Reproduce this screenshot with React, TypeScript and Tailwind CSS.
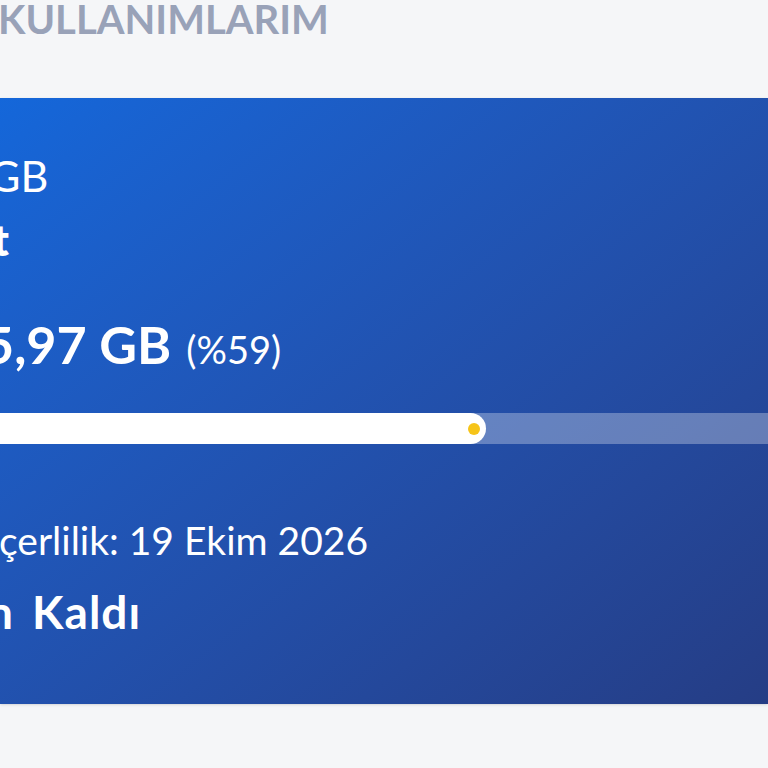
export default function App() {
  const usedPercent = 59;
  return (
    <div className="min-h-screen overflow-hidden bg-[#f5f6f8] font-['Lato',sans-serif]">
      <h1 className="-mt-[1px] -ml-[2px] text-[40px] font-bold leading-none text-[#99a2b8]">KULLANIMLARIM</h1>

      <section className="mt-[59px] h-[606px] bg-linear-to-br from-[#1467da] to-[#253d85] pt-[56px] text-white shadow-sm">
        <p className="-ml-[11px] text-[43px] leading-none">GB</p>
        <p className="mt-[20px] -ml-[8px] text-[44px] font-extrabold leading-none">t</p>

        <div className="mt-[57px] flex items-baseline gap-[15px] leading-none">
          <span className="-ml-[16px] text-[52px] font-bold">5,97 GB</span>
          <span className="text-[38px]">(%{usedPercent})</span>
        </div>

        <div className="mt-[43px] flex h-[31px] w-full bg-white/30">
          <div className="flex h-full w-[486px] items-center justify-end rounded-r-full bg-white pr-[6px]">
            <span className="h-3 w-3 rounded-full bg-[#f6c419]" />
          </div>
        </div>

        <p className="mt-[77px] -ml-[1px] text-[39px] leading-none">çerlilik: 19 Ekim 2026</p>
        <p className="mt-[29px] -ml-[13px] text-[46px] font-bold leading-none tracking-[1px] [word-spacing:6px]">n Kaldı</p>
      </section>
    </div>
  );
}
